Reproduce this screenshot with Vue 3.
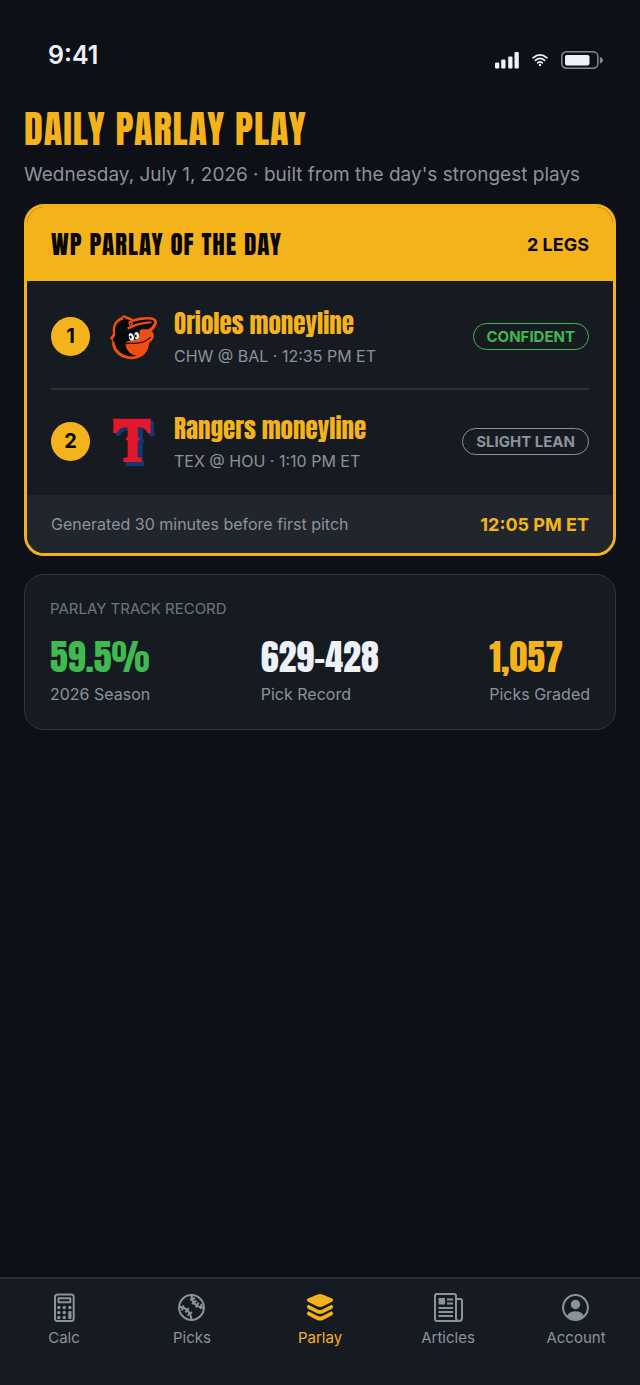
<template>
  <div class="app">
    <header class="status-bar">
      <span class="clock">9:41</span>
      <div class="status-icons">
        <svg class="signal" viewBox="0 0 24 18" aria-hidden="true">
          <rect x="0" y="11.500" width="4.300" height="6" rx="1.200" />
          <rect x="6.200" y="8.500" width="4.300" height="9" rx="1.200" />
          <rect x="13.200" y="5.500" width="4.300" height="12" rx="1.200" />
          <rect x="19.500" y="1" width="4.300" height="16.500" rx="1.200" />
        </svg>
        <svg class="wifi" viewBox="0 0 16 14" aria-hidden="true">
          <path d="M1 4.8Q8-1.2 15 4.8M3.4 7.4Q8 3.4 12.6 7.4M5.7 9.9Q8 8 10.3 9.9" />
          <circle cx="8" cy="12" r="1.2" />
        </svg>
        <svg class="battery" viewBox="0 0 42 18" aria-hidden="true">
          <rect class="battery-shell" x=".8" y=".8" width="36" height="16.4" rx="4.5" />
          <rect class="battery-level" x="4" y="4" width="24.5" height="10.5" rx="2" />
          <path class="battery-cap" d="M38.800 6Q42 7 42 9.200Q42 11.500 38.800 12.500Z" />
        </svg>
      </div>
    </header>

    <main class="content">
      <h1>DAILY PARLAY PLAY</h1>
      <p class="subtitle">Wednesday, July 1, 2026 · built from the day's strongest plays</p>

      <section class="parlay-card">
        <div class="parlay-head">
          <h2>WP PARLAY OF THE DAY</h2>
          <strong>{{ legs.length }} LEGS</strong>
        </div>
        <ol class="legs">
          <li v-for="(leg, i) in legs" :key="leg.team" class="leg">
            <span class="leg-number">{{ i + 1 }}</span>
            <svg v-if="leg.team === 'orioles'" class="logo" viewBox="30 21 144 144" role="img" aria-label="Orioles">
              <path fill="#f04e14" d="M64 34Q70 23 80 31Q92 34 98 40Q128 31 154 34Q172 38 171 50Q167 67 155 75Q163 82 161 95Q156 105 148 110Q145 134 131 147Q112 162 86 159Q60 155 46 138Q34 122 37 104L30 97Q34 89 39 84Q35 56 50 43Q57 36 64 34Z" />
              <path fill="#080b0e" d="M69 38Q73 31 77 39Q90 41 97 48Q128 38 154 41Q164 44 162 51Q156 64 145 70L119 72Q122 84 116 100L95 103Q80 106 77 116Q80 134 93 143Q101 148 110 149Q84 156 63 141Q47 129 44 111L38 100Q44 93 46 86Q42 62 53 50Q60 43 69 41Z" />
              <path fill="#f04e14" d="M82 64Q110 49 153 46Q157 48 153 52Q115 55 84 71Z" />
              <path fill="#f04e14" d="M86 46Q94 41 99 52Q98 60 88 59Q83 53 86 46ZM91 49Q87 53 92 56Q96 53 91 49Z" />
              <path fill="#f04e14" d="M119 73Q136 65 148 75Q156 82 153 92Q150 101 140 106Q139 128 126 140Q108 151 90 136Q78 126 76 113Q82 103 96 104Q115 104 119 88Z" />
              <path fill="none" stroke="#080b0e" stroke-width="3.500" stroke-linecap="round" d="M77 114Q87 110 98 112Q132 113 151 94" />
              <path fill="#fff" d="M86 87Q89 78 96 83Q104 90 101 101Q97 106 90 102Q86 96 86 87ZM104 82Q109 74 115 81Q119 89 116 96Q111 103 106 98Q101 90 104 82Z" />
              <path fill="#080b0e" d="M88 91Q92 86 95 92Q96 97 93 98Q89 96 88 91ZM104 88Q107 83 110 88Q111 93 108 95Q104 93 104 88Z" />
            </svg>
            <svg v-else class="logo" viewBox="30 36 144 144" role="img" aria-label="Rangers">
              <path fill="#143875" d="M48 45H161Q160 65 164 91H149Q146 71 128 70V98L134 105L128 111V162Q131 167 133 168V180H77V166H90V74Q68 71 60 89H47Z" />
              <path fill="#e3192b" d="M38 38H153Q150 57 153 81H142Q138 63 113 64V91Q117 97 121 99Q117 102 113 105V152Q117 155 125 156V168H70V156Q79 156 83 152V105L77 99L83 91V64Q57 63 51 81H39Q43 56 38 38Z" />
            </svg>
            <div class="leg-text">
              <h3>{{ leg.pick }}</h3>
              <p>{{ leg.game }}</p>
            </div>
            <span :class="['pill', leg.level]">{{ leg.label }}</span>
          </li>
        </ol>
        <div class="parlay-foot">
          <span>Generated 30 minutes before first pitch</span>
          <strong>12:05 PM ET</strong>
        </div>
      </section>

      <section class="record-card">
        <h2>PARLAY TRACK RECORD</h2>
        <dl class="stats">
          <div v-for="stat in stats" :key="stat.label" class="stat">
            <dt>{{ stat.label }}</dt>
            <dd :class="stat.tone">{{ stat.value }}</dd>
          </div>
        </dl>
      </section>
    </main>

    <nav class="tab-bar">
      <a v-for="tab in tabs" :key="tab" href="#" :class="['tab', { active: tab === activeTab }]" @click.prevent="activeTab = tab">
        <svg viewBox="0 0 32 32" aria-hidden="true">
          <g v-if="tab === 'Calc'">
            <rect class="line" x="7" y="3.500" width="18.700" height="26.500" rx="2.500" />
            <rect class="line" x="10.500" y="7.300" width="11.800" height="4" />
            <g class="fill">
              <circle cx="10.800" cy="16.500" r="1.700" />
              <circle cx="16.300" cy="16.500" r="1.700" />
              <circle cx="21.900" cy="16.500" r="1.700" />
              <circle cx="10.800" cy="21.500" r="1.700" />
              <circle cx="16.300" cy="21.500" r="1.700" />
              <circle cx="10.800" cy="26.500" r="1.700" />
              <circle cx="16.300" cy="26.500" r="1.700" />
              <rect x="20.300" y="20" width="3.200" height="8" rx="1" />
            </g>
          </g>
          <g v-else-if="tab === 'Picks'">
            <circle class="line" cx="15.500" cy="16.500" r="12.400" />
            <path class="line" d="M15.500 4.500Q16 15 27.500 17M3.500 15.500Q14.500 17.500 15.500 28.500" />
            <path class="line" d="M14 9l5-2M16 13l4.500-3.500M20 16.500l2.500-5M24.500 18l1-5M6 19.500l1.500-5M9.500 21.500l3-4.500M11.500 24.500l4.500-3.500" />
          </g>
          <g v-else-if="tab === 'Parlay'" class="fill">
            <path d="M13 3.800Q16 2.300 19 3.800L28 7.600Q30.500 9 28 10.700L19 15.200Q16 16.700 13 15.200L4 10.700Q1.500 9 4 7.600Z" />
            <path d="M4.500 13.800L12.500 18Q16 20 19.500 18L27.500 13.800Q30.500 15.800 28 17.800L19 22.200Q16 23.500 13 22.200L4 17.800Q1.500 15.800 4.500 13.800Z" />
            <path d="M4.500 20.300L12.500 24.500Q16 26.500 19.500 24.500L27.500 20.300Q30.500 22.300 28 24.300L19 28.900Q16 30.300 13 28.900L4 24.300Q1.500 22.300 4.500 20.300Z" />
          </g>
          <g v-else-if="tab === 'Articles'">
            <path class="line" d="M4.500 3H22Q24 3 24 5V27Q24 30 27 30H5Q3 30 3 28V5Q3 3 4.500 3ZM24 8H28Q30 8 30 10V27Q30 30 27 30Q24 30 24 27" />
            <path class="fill" d="M6.500 7h6.500v6.500h-6.500z" />
            <path class="line" d="M15 8.500h6M15 12.500h6M6.500 17h14.500M6.500 21h14.500M6.500 25h14.500" />
          </g>
          <g v-else>
            <circle class="line" cx="15.500" cy="16.500" r="12.400" />
            <circle class="fill" cx="15.500" cy="13.500" r="4.700" />
            <path class="fill" d="M7.200 24.500Q10 20.300 15.500 20.300T23.800 24.500Q20.500 28.500 15.500 28.500T7.200 24.500Z" />
          </g>
        </svg>
        <span>{{ tab }}</span>
      </a>
    </nav>
  </div>
</template>

<script setup>
import { ref } from 'vue'

const legs = [
  { team: 'orioles', pick: 'Orioles moneyline', game: 'CHW @ BAL · 12:35 PM ET', level: 'confident', label: 'CONFIDENT' },
  { team: 'rangers', pick: 'Rangers moneyline', game: 'TEX @ HOU · 1:10 PM ET', level: 'lean', label: 'SLIGHT LEAN' },
]

const stats = [
  { label: '2026 Season', value: '59.5%', tone: 'green' },
  { label: 'Pick Record', value: '629-428', tone: 'white' },
  { label: 'Picks Graded', value: '1,057', tone: 'gold' },
]

const tabs = ['Calc', 'Picks', 'Parlay', 'Articles', 'Account']
const activeTab = ref('Parlay')
</script>

<style>
body {
  margin: 0;
  background: #0d1017;
}
</style>

<style scoped>
.app {
  display: flex;
  flex-direction: column;
  min-height: 100vh;
  color: #8b929d;
  background: #0d1017;
  font-family: Inter, "Liberation Sans", sans-serif;
}
h1, h2, h3, p, ol, dl, dd {
  margin: 0;
  padding: 0;
}
h1, .parlay-head h2, h3, dd {
  font-family: Anton, Impact, "Liberation Sans Narrow", sans-serif;
  font-weight: 400;
  white-space: nowrap;
}

.status-bar {
  display: flex;
  justify-content: space-between;
  padding: 38px 37px 0 48px;
  height: 66px;
}
.clock {
  color: #edf1fa;
  font-size: 25px;
  font-weight: 600;
  line-height: 34px;
}
.status-icons {
  display: flex;
  align-items: center;
  gap: 13px;
  height: 44px;
  fill: #edf1fa;
}
.signal {
  width: 24px;
  height: 18px;
}
.wifi {
  width: 16px;
  height: 14px;
}
.wifi path {
  fill: none;
  stroke: #edf1fa;
  stroke-width: 1.6;
  stroke-linecap: round;
}
.battery {
  width: 42px;
  height: 18px;
}
.battery-shell {
  fill: none;
  stroke: #858891;
  stroke-width: 1.5;
}
.battery-cap {
  fill: #858891;
}

.content {
  flex: 1;
  padding: 0 24px;
}
h1 {
  color: #f5b31b;
  font-size: 38px;
  letter-spacing: 1px;
  line-height: 50px;
}
.subtitle {
  margin: 7px 0 15px;
  font-size: 19px;
  line-height: 28px;
}

.parlay-card {
  overflow: hidden;
  border: 3px solid #f5b31b;
  border-radius: 20px;
  background: #161b22;
}
.parlay-head {
  display: flex;
  align-items: center;
  justify-content: space-between;
  height: 74px;
  padding: 0 24px;
  color: #080704;
  background: #f5b31b;
}
.parlay-head h2 {
  font-size: 25px;
  letter-spacing: 1px;
}
.parlay-head strong {
  font-size: 18px;
  font-weight: 700;
}
.legs {
  padding: 4px 24px 2px;
  list-style: none;
}
.leg {
  display: flex;
  align-items: center;
  height: 103px;
}
.leg + .leg {
  border-top: 2px solid #2a3038;
}
.leg-number {
  width: 39px;
  border-radius: 50%;
  color: #080704;
  background: #f5b31b;
  font-size: 20px;
  font-weight: 700;
  line-height: 39px;
  text-align: center;
}
.logo {
  width: 48px;
  height: 48px;
  margin: 0 16px 0 20px;
}
.leg-text {
  flex: 1;
}
h3 {
  color: #f5b31b;
  font-size: 25px;
  line-height: 38px;
}
.leg-text p {
  font-size: 16px;
  line-height: 26px;
}
.pill {
  padding: 0 13px;
  border: 1px solid;
  border-radius: 14px;
  font-size: 15px;
  font-weight: 700;
  line-height: 25px;
}
.confident, .green {
  color: #3fb950;
}
.parlay-foot {
  display: flex;
  align-items: center;
  justify-content: space-between;
  height: 58px;
  padding: 0 24px;
  background: #21262d;
  font-size: 16px;
}
.parlay-foot strong {
  color: #f5b31b;
  font-size: 18px;
  font-weight: 700;
}

.record-card {
  margin-top: 18px;
  padding: 23px 25px;
  border: 1px solid #30363e;
  border-radius: 20px;
  background: #161b22;
}
.record-card h2 {
  color: #6e7681;
  font-size: 15px;
  font-weight: 400;
  line-height: 22px;
}
.stats {
  display: flex;
  justify-content: space-between;
  margin-top: 12px;
}
.stat {
  display: flex;
  flex-direction: column-reverse;
}
.stat dt {
  font-size: 16px;
  line-height: 24px;
}
.stat dd {
  font-size: 36px;
  line-height: 50px;
}
.stat .white {
  color: #edf1fa;
}
.stat .gold {
  color: #f5b31b;
}

.tab-bar {
  display: flex;
  height: 106px;
  border-top: 2px solid #2a3038;
  background: #161b22;
}
.tab {
  display: flex;
  flex: 1;
  flex-direction: column;
  align-items: center;
  padding-top: 12px;
  color: #8b929d;
  font-size: 15px;
  line-height: 22px;
  text-decoration: none;
}
.tab svg {
  width: 32px;
  height: 32px;
  margin-bottom: 4px;
}
.tab.active {
  color: #f5b31b;
}
.line {
  fill: none;
  stroke: currentColor;
  stroke-width: 2;
  stroke-linejoin: round;
}
.fill {
  fill: currentColor;
}
</style>
